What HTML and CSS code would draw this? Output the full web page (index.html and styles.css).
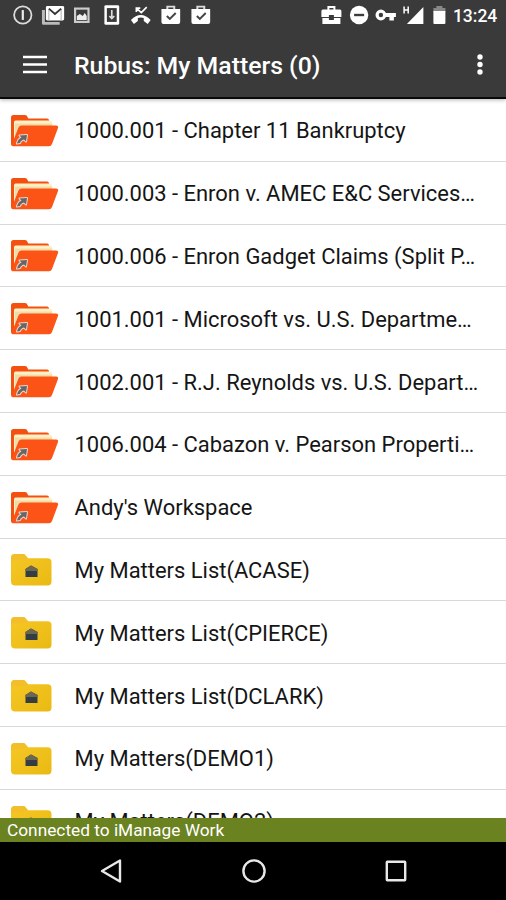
FILE: index.html
```html
<!DOCTYPE html>
<html lang="en">
<head>
<meta charset="utf-8">
<title>Rubus: My Matters</title>
<link rel="stylesheet" href="styles.css">
</head>
<body>
<svg class="defs" width="0" height="0" aria-hidden="true">
  <defs>
    <linearGradient id="gold" x1="0" y1="0" x2="1" y2="1"><stop offset="0" stop-color="#f7c825"/><stop offset="1" stop-color="#e9b913"/></linearGradient>
    <symbol id="workspace" viewBox="0 0 50 34">
      <path d="M1 30V3.500Q1 1 3.500 1H15q2 0 2.500 2l.8 1.500H37q2 0 2 2v7H12L3 32Q1 32 1 30Z" fill="#f4500f"/>
      <path d="M4 8Q4 6.500 5.500 6.500H39.500q2.500 0 3 2.500v5H10L4 27Z" fill="#fff0c5"/>
      <path d="M5 9.500h37v4H10L5 25Z" fill="#f1dba6"/>
      <path d="M11.500 11.500H46q2.800 0 2 2.500L42 30q-.8 2.300-3 2.300H3q-1.800 0-1.200-2L8.500 13.500q.8-2 3-2Z" fill="#fc5416"/>
      <path d="M7 29.500q1-4.500 4.500-6L9.500 21.500 17 21 16 27.500l-2-2q-3.500 1-4 3.500Z" fill="#666" stroke="#e8d8ce" stroke-width="2" stroke-linejoin="round" paint-order="stroke"/>
    </symbol>
    <symbol id="matters" viewBox="0 0 50 34">
      <path d="M1 5Q1 1 5 1H13q2 0 3 2l2 2.200H37.500q4 0 4 4V28.500q0 4-4 4H5q-4 0-4-4Z" fill="url(#gold)"/>
      <path d="M1 5Q1 1 5 1H13q2 0 3 2l2 2.200-3 2H5Q2 7 1 9Z" fill="#f2bf2a"/>
      <path d="M15.500 16 21 12.500l6.500 3.500v8H15.500Z" fill="#343d44"/>
      <path d="M15.500 16 21 12.500l6.500 3.500v2H15.500Z" fill="#6b6750"/>
    </symbol>
  </defs>
</svg>
<main class="screen">
  <header class="top">
    <div class="status">
      <div class="status-left">
        <svg viewBox="-15 -15 30 30"><circle r="8.800" fill="none" stroke="#ddd" stroke-width="1.800"/><path d="M0-5V5" stroke="#eee" stroke-width="2.200"/></svg>
        <svg viewBox="-15 -15 30 30"><path d="M-9.500-5V8.500H7" fill="none" stroke="#bbb" stroke-width="3" stroke-linejoin="round"/><rect x="-7" y="-9" width="18.500" height="14.500" rx="1.500" fill="#fff"/><path d="M-4 5.500V-6M8.500-6V5.500" fill="none" stroke="#bbb" stroke-width="1.200"/><path d="M-4-6.500 2.200-1 8.500-6.500" fill="none" stroke="#333" stroke-width="1.800"/></svg>
        <svg viewBox="-15 -15 30 30"><rect x="-6.800" y="-6.500" width="13.600" height="13.500" fill="none" stroke="#ccc" stroke-width="2.200"/><path d="M-5 5v-4l3-2 3 2 2-3 2 3V5Z" fill="#eee"/></svg>
        <svg viewBox="-15 -15 30 30"><rect x="-7.500" y="-10" width="15" height="20" rx="1.500" fill="#fff"/><rect x="-5" y="-7" width="10" height="14" fill="#3b3b3b"/><path d="M0-5V3M-2.500 1 0 3.500 2.500 1" fill="none" stroke="#ddd" stroke-width="1.700"/></svg>
        <svg viewBox="-15 -15 30 30"><path d="M-4.500-3V-7h4M-4.500-7 .5-2.500 6-8" fill="none" stroke="#fff" stroke-width="1.700"/><path d="M-10 5Q0-5 10 5L7 9 3 6V3Q0 2-3 3V6L-7 9Z" fill="#fff"/></svg>
        <svg viewBox="-15 -15 30 30"><path d="M-3.500-5V-8.500H3.500V-5" fill="none" stroke="#ddd" stroke-width="2"/><path d="M-9.500-6H9.500V7q0 2-2 2h-15q-2 0-2-2Z" fill="#fff"/><path d="M-4 1-1 4 5-2" fill="none" stroke="#444" stroke-width="2"/></svg>
        <svg viewBox="-15 -15 30 30"><path d="M-3.500-5V-8.500H3.500V-5" fill="none" stroke="#ddd" stroke-width="2"/><path d="M-9.500-6H9.500V7q0 2-2 2h-15q-2 0-2-2Z" fill="#fff"/><path d="M-4 1-1 4 5-2" fill="none" stroke="#444" stroke-width="2"/></svg>
      </div>
      <div class="status-right">
        <svg viewBox="-13.400 -15 26.800 30"><path d="M-3-5V-8H3V-5" fill="none" stroke="#fff" stroke-width="2"/><path d="M-10-4q0-1.500 1.500-1.500h17Q10-5.500 10-4V2H2.500V0h-5V2H-10ZM-9 3h6.500v2h5v-2H9V9H-9Z" fill="#fff"/></svg>
        <svg viewBox="-14.100 -15 26.800 30"><circle r="9.200" fill="#fff"/><path d="M-5 0H5" stroke="#3b3b3b" stroke-width="2.400"/></svg>
        <svg viewBox="-13.400 -15 26.800 30"><circle cx="-4.500" r="3.800" fill="none" stroke="#fff" stroke-width="3.200"/><path d="M-1-2H10.500V2H8.500V5.500H4V2H-1Z" fill="#fff"/></svg>
        <svg viewBox="-13.400 -15 26.800 30"><path d="M-5.500 9 11-8V9Z" fill="#fff"/><path d="M-8.300-8.500v7M-4.200-8.500v7M-8.500-5h4.500" stroke="#fff" stroke-width="1.500"/></svg>
        <svg viewBox="-13.400 -15 26.800 30"><path d="M-6-7h3v-2h6v2h3v4H-6Z" fill="#888"/><path d="M-6-4H6V8q0 1-1 1H-5q-1 0-1-1Z" fill="#fff"/></svg>
        <span class="clock">13:24</span>
      </div>
    </div>
    <div class="appbar">
      <svg class="menu" viewBox="0 0 24 20"><path d="M0 2H24M0 9.500H24M0 17H24" stroke="#fff" stroke-width="2.400"/></svg>
      <h1>Rubus: My Matters (0)</h1>
      <svg class="more" viewBox="0 0 8 22"><g fill="#fff"><circle cx="4" cy="3" r="2.700"/><circle cx="4" cy="10.500" r="2.700"/><circle cx="4" cy="18" r="2.700"/></g></svg>
    </div>
  </header>
  <ul class="list">
    <li><svg><use href="#workspace"/></svg><span>1000.001 - Chapter 11 Bankruptcy</span></li>
    <li><svg><use href="#workspace"/></svg><span>1000.003 - Enron v. AMEC E&amp;C Services…</span></li>
    <li><svg><use href="#workspace"/></svg><span>1000.006 - Enron Gadget Claims (Split P…</span></li>
    <li><svg><use href="#workspace"/></svg><span>1001.001 - Microsoft vs. U.S. Departme…</span></li>
    <li><svg><use href="#workspace"/></svg><span>1002.001 - R.J. Reynolds vs. U.S. Depart…</span></li>
    <li><svg><use href="#workspace"/></svg><span>1006.004 - Cabazon v. Pearson Properti…</span></li>
    <li><svg><use href="#workspace"/></svg><span>Andy's Workspace</span></li>
    <li><svg><use href="#matters"/></svg><span>My Matters List(ACASE)</span></li>
    <li><svg><use href="#matters"/></svg><span>My Matters List(CPIERCE)</span></li>
    <li><svg><use href="#matters"/></svg><span>My Matters List(DCLARK)</span></li>
    <li><svg><use href="#matters"/></svg><span>My Matters(DEMO1)</span></li>
    <li><svg><use href="#matters"/></svg><span>My Matters(DEMO2)</span></li>
  </ul>
  <footer class="connection">Connected to iManage Work</footer>
  <nav class="nav">
    <svg viewBox="-13 -13 26 26"><path d="M-9 0 9-10.500V10.500Z"/></svg>
    <svg viewBox="-13 -13 26 26"><circle r="10.600"/></svg>
    <svg viewBox="-13 -13 26 26"><rect x="-9.200" y="-9.200" width="18.400" height="18.400" rx=".5"/></svg>
  </nav>
</main>
</body>
</html>
```
FILE: styles.css
```css
* { box-sizing: border-box; }
body { margin: 0; font-family: Roboto, sans-serif; background: #000; }
.defs { display: block; }
.screen { width: 506px; height: 900px; display: flex; flex-direction: column; overflow: hidden; background: #fff; }
.top { flex: none; height: 99px; background: #3a3a3a; color: #fff; border-bottom: 2px solid #080808; box-shadow: 0 1px 4px rgba(0,0,0,.3); z-index: 1; }
.status { height: 30px; padding: 0 8px; display: flex; justify-content: space-between; }
.status-left, .status-right { display: flex; align-items: center; }
.status-left svg { width: 29.6px; height: 30px; }
.status-right svg { width: 26.8px; height: 30px; }
.status-right { width: 179.600px; }
.clock { margin-left: .5px; font-size: 17.5px; font-weight: 500; line-height: 30px; padding-top: 2px; white-space: nowrap; }
.appbar { height: 68px; display: flex; align-items: center; padding: 2px 22px 0 23px; }
.menu { width: 24px; height: 20px; }
.appbar h1 { margin: 0 auto 0 27px; padding-top: 1px; font-size: 24.8px; font-weight: 500; line-height: 32px; white-space: nowrap; }
.more { width: 8px; height: 22px; }
.list { flex: 1; min-height: 0; margin: 0; padding: 0; overflow: hidden; list-style: none; }
.list li { height: 62.8px; display: flex; align-items: center; padding-left: 10px; border-bottom: 1.500px solid #d9d9d9; }
.list svg { width: 50px; height: 34px; flex: none; margin-top: 2px; }
.list span { margin-left: 14.5px; padding-top: 3px; font-size: 21.95px; line-height: 30px; color: #151515; white-space: nowrap; }
.connection { flex: none; height: 24px; padding-left: 7px; background: #6b8221; color: #fff; font-size: 17.3px; line-height: 25px; }
.nav { flex: none; height: 58px; padding-left: 98px; display: flex; align-items: center; gap: 116.5px; background: #000; }
.nav svg { width: 26px; height: 26px; fill: none; stroke: #e8e8e8; stroke-width: 2.400; stroke-linejoin: round; }
```
